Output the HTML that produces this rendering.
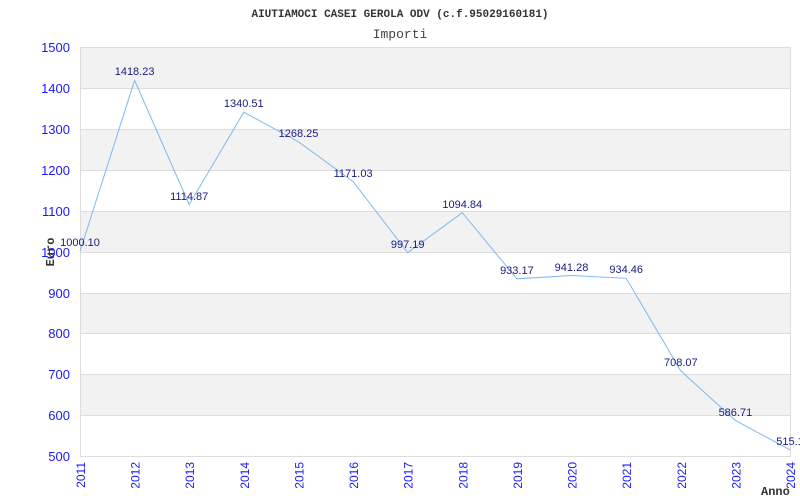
<!DOCTYPE html>
<html><head><style>body{margin:0;background:#fff}svg{display:block}</style></head><body>
<svg width="800" height="500" xmlns="http://www.w3.org/2000/svg" font-family="Liberation Sans, sans-serif">
<rect width="800" height="500" fill="#fff"/>
<text x="400" y="17" text-anchor="middle" font-family="Liberation Mono, monospace" font-weight="bold" font-size="11" fill="#333">AIUTIAMOCI CASEI GEROLA ODV (c.f.95029160181)</text>
<text x="400" y="38" text-anchor="middle" font-family="Liberation Mono, monospace" font-size="13" fill="#444">Importi</text>
<g fill="#f2f2f2">
<rect x="80" y="47" width="710" height="41"/><rect x="80" y="129" width="710" height="41"/><rect x="80" y="211" width="710" height="41"/><rect x="80" y="293" width="710" height="41"/><rect x="80" y="374" width="710" height="41"/>
</g>
<g stroke="#ddd" stroke-width="1">
<line x1="80" y1="47.5" x2="790" y2="47.5"/><line x1="80" y1="88.5" x2="790" y2="88.5"/><line x1="80" y1="129.5" x2="790" y2="129.5"/><line x1="80" y1="170.5" x2="790" y2="170.5"/><line x1="80" y1="211.5" x2="790" y2="211.5"/><line x1="80" y1="252.5" x2="790" y2="252.5"/><line x1="80" y1="293.5" x2="790" y2="293.5"/><line x1="80" y1="333.5" x2="790" y2="333.5"/><line x1="80" y1="374.5" x2="790" y2="374.5"/><line x1="80" y1="415.5" x2="790" y2="415.5"/><line x1="80" y1="456.5" x2="790" y2="456.5"/>
<line x1="80.5" y1="47" x2="80.5" y2="457"/><line x1="790.5" y1="47" x2="790.5" y2="457"/>
</g>
<g fill="#1a1aff" font-size="13" text-anchor="end">
<text x="70" y="52">1500</text><text x="70" y="93">1400</text><text x="70" y="134">1300</text><text x="70" y="175">1200</text><text x="70" y="216">1100</text><text x="70" y="257">1000</text><text x="70" y="298">900</text><text x="70" y="338">800</text><text x="70" y="379">700</text><text x="70" y="420">600</text><text x="70" y="461">500</text>
</g>
<g fill="#1a1aff" font-size="12" text-anchor="end">
<text transform="translate(85,462) rotate(-90)">2011</text>
<text transform="translate(139.6,462) rotate(-90)">2012</text>
<text transform="translate(194.2,462) rotate(-90)">2013</text>
<text transform="translate(248.8,462) rotate(-90)">2014</text>
<text transform="translate(303.5,462) rotate(-90)">2015</text>
<text transform="translate(358.1,462) rotate(-90)">2016</text>
<text transform="translate(412.7,462) rotate(-90)">2017</text>
<text transform="translate(467.3,462) rotate(-90)">2018</text>
<text transform="translate(521.9,462) rotate(-90)">2019</text>
<text transform="translate(576.5,462) rotate(-90)">2020</text>
<text transform="translate(631.2,462) rotate(-90)">2021</text>
<text transform="translate(685.8,462) rotate(-90)">2022</text>
<text transform="translate(740.4,462) rotate(-90)">2023</text>
<text transform="translate(795,462) rotate(-90)">2024</text>
</g>
<text transform="translate(54,252) rotate(-90)" text-anchor="middle" font-family="Liberation Mono, monospace" font-weight="bold" font-size="12" fill="#333">Euro</text>
<text x="761" y="495" font-family="Liberation Mono, monospace" font-weight="bold" font-size="12" fill="#333">Anno</text>
<polyline fill="none" stroke="#7fb8f0" stroke-width="1" points="80,251.4 134.6,80.4 189.2,204.5 243.8,112.2 298.5,141.8 353.1,181.6 407.7,252.7 462.3,212.7 516.9,278.8 571.5,275.5 626.2,278.3 680.8,370.9 735.4,420.5 790,449.8"/>
<g fill="#1a1a80" font-size="11" text-anchor="middle">
<text x="80" y="246">1000.10</text><text x="134.6" y="75">1418.23</text><text x="189.2" y="200">1114.87</text><text x="243.8" y="107">1340.51</text><text x="298.5" y="137">1268.25</text><text x="353.1" y="177">1171.03</text><text x="407.7" y="248">997.19</text><text x="462.3" y="208">1094.84</text><text x="516.9" y="274">933.17</text><text x="571.5" y="271">941.28</text><text x="626.2" y="273">934.46</text><text x="680.8" y="366">708.07</text><text x="735.4" y="416">586.71</text><text x="790" y="445">515.1</text>
</g>
</svg>
</body></html>
